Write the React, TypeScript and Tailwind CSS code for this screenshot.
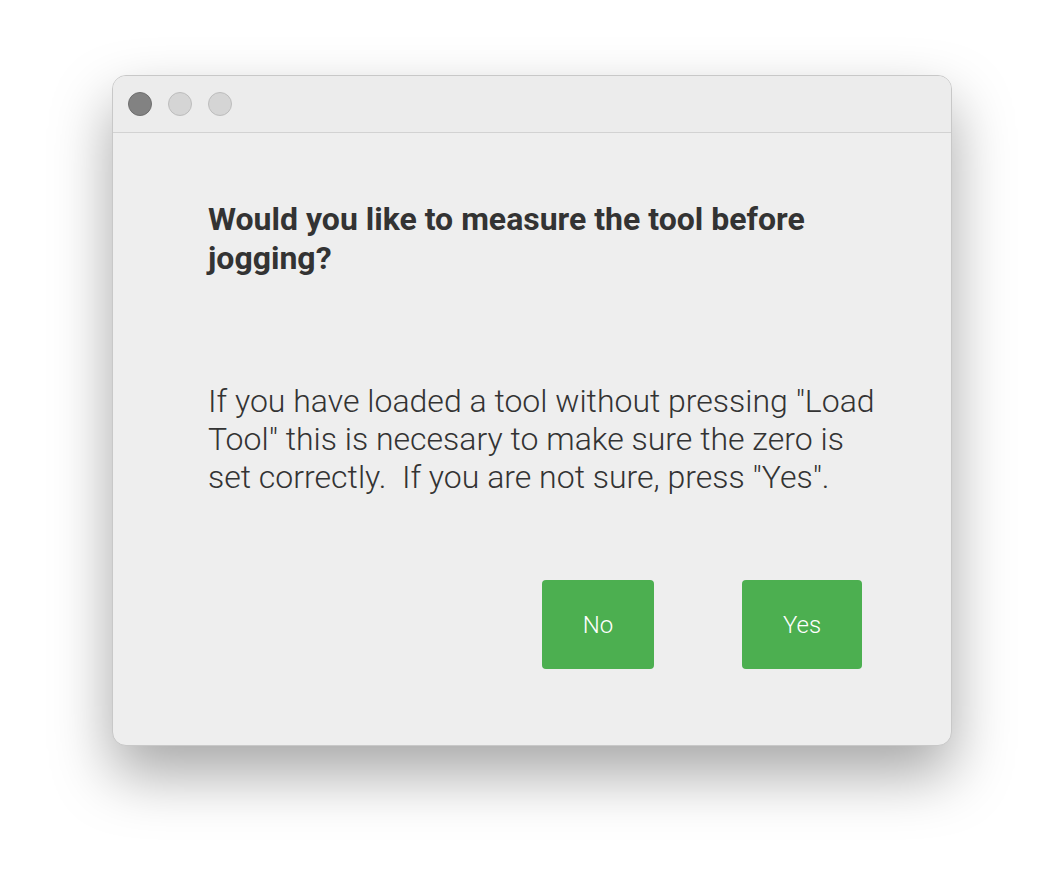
export default function App() {
  return (
    <div className="w-[1064px] h-[894px] bg-white flex flex-col" style={{ fontFamily: "Roboto, 'Noto Sans', sans-serif" }}>
      <div className="ml-[112px] mt-[75px] w-[840px] h-[671px] rounded-[14px] bg-[#eeeeee] border border-[#c8c8c8] shadow-[0_28px_60px_rgba(0,0,0,0.35)] flex flex-col overflow-hidden">
        <div className="h-[57px] shrink-0 bg-[#ececec] border-b border-[#d2d2d2] flex items-center gap-4 pl-[15px]">
          <div className="w-6 h-6 rounded-full bg-[#828282] border border-[#6e6e6e]" />
          <div className="w-6 h-6 rounded-full bg-[#d5d5d5] border border-[#bdbdbd]" />
          <div className="w-6 h-6 rounded-full bg-[#d5d5d5] border border-[#bdbdbd]" />
        </div>
        <div className="flex flex-col pl-[95px] pr-[60px]">
          <h1 className="mt-[67px] text-[32px] leading-[39px] font-bold text-[#333333]">
            Would you like to measure the tool before jogging?
          </h1>
          <p className="mt-[104px] text-[32px] leading-[38px] font-light text-[#333333]">
            If you have loaded a tool without pressing "Load Tool" this is necesary to make sure the zero is set correctly.&nbsp; If you are not sure, press "Yes".
          </p>
          <div className="mt-[84px] mr-[29px] flex justify-end gap-[88px]">
            <button className="w-[112px] h-[89px] rounded-[4px] bg-[#4caf50] text-white text-[24px] font-light">No</button>
            <button className="w-[120px] h-[89px] rounded-[4px] bg-[#4caf50] text-white text-[24px] font-light">Yes</button>
          </div>
        </div>
      </div>
    </div>
  );
}
